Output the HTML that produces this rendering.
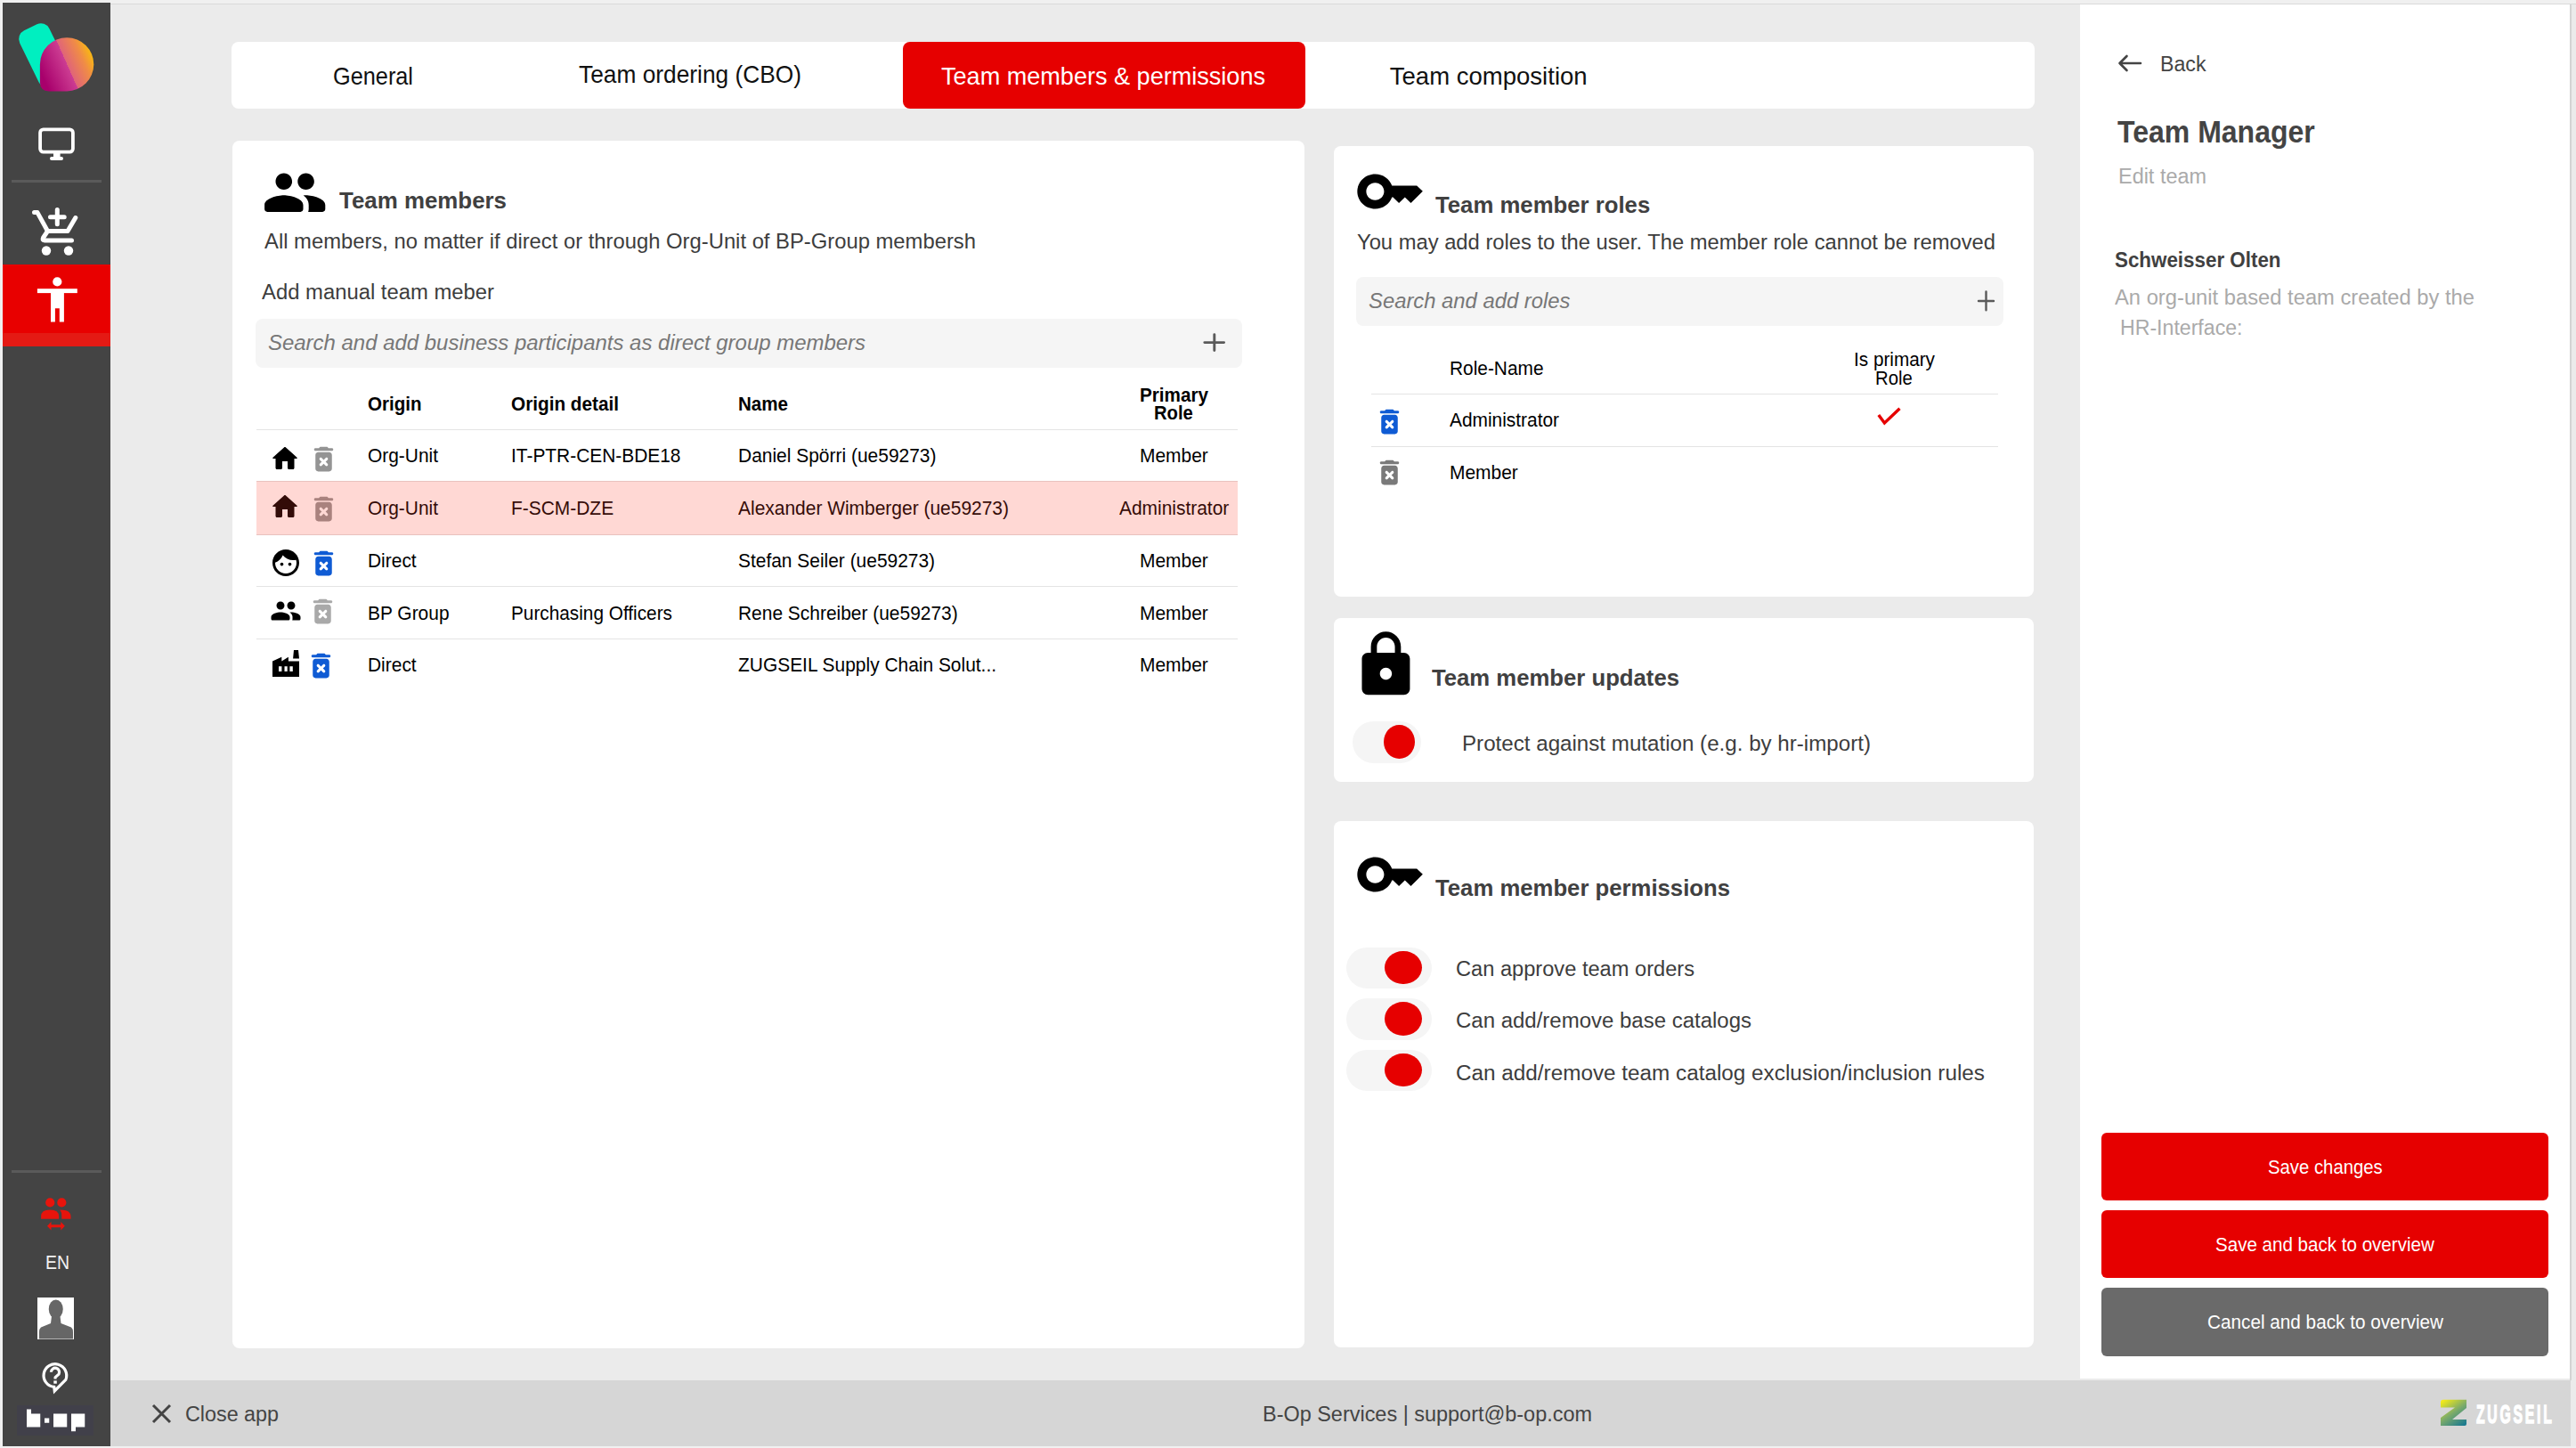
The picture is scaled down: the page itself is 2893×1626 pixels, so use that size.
<!DOCTYPE html>
<html><head><meta charset="utf-8">
<style>
html,body{margin:0;padding:0;}
body{width:2893px;height:1626px;position:relative;overflow:hidden;background:#f0f0f0;font-family:"Liberation Sans",sans-serif;}
.a{position:absolute;}
.t{position:absolute;white-space:nowrap;line-height:1;transform-origin:0 0;font-family:"Liberation Sans",sans-serif;}
.card{position:absolute;background:#fff;border-radius:8px;}
.sb{position:absolute;background:#f5f5f5;border-radius:8px;}
.hl{position:absolute;height:1px;background:#e4e4e4;}
.trk{position:absolute;background:#f5f5f5;border-radius:24px;}
.thm{position:absolute;background:#e60000;border-radius:50%;}
svg{position:absolute;overflow:visible;}
</style></head>
<body>
<!-- main background -->
<div class="a" style="left:124px;top:4px;width:2769px;height:1px;background:#d9d9d9"></div>
<div class="a" style="left:124px;top:5px;width:2769px;height:1619px;background:#ebebeb"></div>

<!-- sidebar -->
<div class="a" style="left:3px;top:3px;width:121px;height:1621px;background:#444"></div>
<svg style="left:0;top:0" width="124" height="120" viewBox="0 0 124 120">
  <defs>
    <linearGradient id="lg" gradientUnits="userSpaceOnUse" x1="47" y1="84" x2="103" y2="59">
      <stop offset="0" stop-color="#a8006c"/>
      <stop offset="0.5" stop-color="#cc3d92"/>
      <stop offset="0.5" stop-color="#e06479"/>
      <stop offset="0.8" stop-color="#f08c46"/>
      <stop offset="1" stop-color="#f9ba10"/>
    </linearGradient>
  </defs>
  <rect x="-18.5" y="-35" width="37" height="70" rx="10.5" fill="#00efc0" transform="translate(49.6,62.3) rotate(-26)"/>
  <path d="M44.9,72.3 A30.2,30.1 0 0 1 105.3,72.3 A30.2,30.1 0 0 1 75.1,102.4 L55,102.4 Q44.9,102.4 44.9,92.3 Z" fill="url(#lg)"/>
</svg>
<!-- monitor -->
<svg style="left:0;top:0" width="124" height="200">
  <rect x="45.1" y="145.4" width="36.8" height="25.2" rx="3.5" fill="none" stroke="#fff" stroke-width="3.8"/>
  <rect x="60" y="171" width="7.6" height="6" fill="#fff"/>
  <rect x="56" y="176" width="15" height="4" rx="2" fill="#fff"/>
</svg>
<div class="a" style="left:13px;top:202px;width:101px;height:3px;background:#5a5a5a"></div>
<!-- cart -->
<svg style="left:0;top:0" width="124" height="300">
  <path d="M38.5,238.6 L42,238.6 L53.5,259.5 L76,259.5 L84.8,244.5" fill="none" stroke="#fff" stroke-width="5" stroke-linecap="round" stroke-linejoin="round"/>
  <path d="M53.5,259.5 L48.5,267 Q47,270 50,270 L80.5,270" fill="none" stroke="#fff" stroke-width="5" stroke-linecap="round" stroke-linejoin="round"/>
  <circle cx="52" cy="281.5" r="5.2" fill="#fff"/>
  <circle cx="77" cy="281.5" r="5.2" fill="#fff"/>
  <path d="M56.5,243.7 L72.2,243.7 M64.3,235.6 L64.3,251.8" stroke="#fff" stroke-width="5" stroke-linecap="round"/>
</svg>
<!-- active red item -->
<div class="a" style="left:3px;top:297px;width:121px;height:77px;background:#e80000"></div>
<div class="a" style="left:3px;top:374px;width:121px;height:15px;background:#e41a14"></div>
<svg style="left:0;top:0" width="124" height="400">
  <circle cx="64.3" cy="316.4" r="5.1" fill="#fff"/>
  <rect x="41.9" y="324.2" width="44.9" height="4.9" fill="#fff"/>
  <path d="M57,329 L71.9,329 L71.9,361.4 L66.8,361.4 L66.8,346.2 L61.9,346.2 L61.9,361.4 L57,361.4 Z" fill="#fff"/>
</svg>

<div class="a" style="left:13px;top:1314px;width:101px;height:3px;background:#5a5a5a"></div>
<!-- team switch icon (red) -->
<svg style="left:0;top:0" width="124" height="1400">
  <circle cx="56.25" cy="1350.4" r="5.1" fill="#e8140c"/>
  <circle cx="69.3" cy="1350.4" r="5.1" fill="#e8140c"/>
  <path d="M46.1,1368.7 L46.1,1366 Q46.1,1358.6 56.1,1358.6 Q66.1,1358.6 66.1,1366 L66.1,1368.7 Z" fill="#e8140c"/>
  <path d="M67.3,1358.6 Q79.5,1358.6 79.5,1366 L79.5,1368.7 L69.3,1368.7 L69.3,1366 Q69.3,1361 67.3,1358.6 Z" fill="#e8140c"/>
  <path d="M53,1376.7 L57.5,1372 L57.5,1375.2 L68.3,1375.2 L68.3,1372 L72.8,1376.7 L68.3,1381.4 L68.3,1378.2 L57.5,1378.2 L57.5,1381.4 Z" fill="#e8140c"/>
</svg>
<!-- avatar -->
<div class="a" style="left:42px;top:1457px;width:41px;height:47px;background:#fff"></div>
<svg style="left:0;top:0" width="124" height="1510">
  <ellipse cx="62.75" cy="1470" rx="8" ry="10.5" fill="#666"/>
  <path d="M58,1478 L67.5,1478 L68.5,1486 L80,1490.5 Q82,1492 82,1496 L82,1503.5 L44,1503.5 L44,1496 Q44,1492 46,1490.5 L57,1486 Z" fill="#666"/>
</svg>
<!-- help -->
<svg style="left:0;top:0" width="124" height="1600">
  <path d="M61.3,1562 L60.78,1557.4 A12.85,12.85 0 1 1 73.8,1549.4 Z" fill="none" stroke="#fff" stroke-width="3.2" stroke-linejoin="miter" stroke-miterlimit="3"/>
  <path d="M57.4,1540.8 A4.6,4.6 0 1 1 66,1543.1 L62.1,1546.6 L62.1,1548.6" fill="none" stroke="#fff" stroke-width="3.2" stroke-linejoin="round"/>
  <rect x="60.3" y="1550.4" width="3.5" height="3.3" fill="#fff"/>
</svg>
<!-- b-op -->
<div class="a" style="left:19px;top:1578px;width:86px;height:34px;background:#41404a"></div>
<svg style="left:0;top:0" width="124" height="1626">
  <path d="M30,1582.5 L35,1582.5 L35,1587.5 L45.25,1587.5 L45.25,1602.5 L30,1602.5 Z" fill="#fff"/>
  <rect x="50" y="1592.5" width="5.25" height="5.25" fill="#fff"/>
  <rect x="60" y="1587.5" width="15.25" height="15" fill="#fff"/>
  <path d="M80,1587.5 L95.25,1587.5 L95.25,1602.5 L85,1602.5 L85,1607.25 L80,1607.25 Z" fill="#fff"/>
</svg>

<!-- footer -->
<div class="a" style="left:124px;top:1550px;width:2763px;height:74px;background:#d6d6d6"></div>
<svg style="left:0;top:0" width="400" height="1626">
  <path d="M172,1578 L191,1597 M191,1578 L172,1597" stroke="#444" stroke-width="3"/>
</svg>
<svg style="left:0;top:0" width="2893" height="1626">
  <defs>
    <linearGradient id="zg" gradientUnits="userSpaceOnUse" x1="2745" y1="1572" x2="2766" y2="1601">
      <stop offset="0" stop-color="#f2ea1a"/>
      <stop offset="0.5" stop-color="#7aaa6a"/>
      <stop offset="1" stop-color="#1a7a90"/>
    </linearGradient>
  </defs>
  <path d="M2744,1571.8 L2770,1571.8 L2770,1581 L2754,1594 L2770,1594 L2770,1599 Q2770,1601 2768,1601 L2741,1601 L2741,1592 L2757,1580.5 L2741,1580.5 L2741,1575 Q2741,1571.8 2744,1571.8 Z" fill="url(#zg)"/>
</svg>

<!-- tab bar -->
<div class="a" style="left:260px;top:47px;width:2025px;height:74.5px;background:#fff;border-radius:8px"></div>
<div class="a" style="left:1014.25px;top:47px;width:451.5px;height:74.5px;background:#e60000;border-radius:8px"></div>

<!-- team members card -->
<div class="card" style="left:261px;top:158px;width:1204px;height:1355.5px"></div>
<svg style="left:293.7px;top:178.5px" width="74.4" height="74.4" viewBox="0 0 24 24"><path fill="#000" d="M16 11c1.66 0 2.99-1.34 2.99-3S17.66 5 16 5s-3 1.34-3 3 1.34 3 3 3zm-8 0c1.66 0 2.99-1.34 2.99-3S9.66 5 8 5 5 6.34 5 8s1.34 3 3 3zm0 2c-2.33 0-7 1.17-7 3.5V18c0 .55.45 1 1 1h12c.55 0 1-.45 1-1v-1.5c0-2.33-4.67-3.5-7-3.5zm8 0c-.29 0-.62.02-.97.05.02.01.03.03.04.04 1.14.83 1.93 1.94 1.93 3.41V18c0 .35-.07.69-.18 1H22c.55 0 1-.45 1-1v-1.5c0-2.33-4.67-3.5-7-3.5z"/></svg>
<div class="sb" style="left:287px;top:357.5px;width:1108px;height:55.5px"></div>
<svg style="left:0;top:0" width="1400" height="420"><path d="M1352.8,384.6 L1374.6,384.6 M1363.8,375.6 L1363.8,393.5" stroke="#5a5a5a" stroke-width="2.9" stroke-linecap="round"/></svg>

<!-- table lines -->
<div class="hl" style="left:288px;top:481.5px;width:1102px"></div>
<div class="hl" style="left:288px;top:539.5px;width:1102px"></div>
<div class="hl" style="left:288px;top:600px;width:1102px"></div>
<div class="hl" style="left:288px;top:657.5px;width:1102px"></div>
<div class="hl" style="left:288px;top:717px;width:1102px"></div>

<!-- row icons -->
<!-- home row1 -->
<svg style="left:301.6px;top:497px" width="36" height="36" viewBox="0 0 24 24"><path fill="#000" d="M10 19v-5h4v5c0 .55.45 1 1 1h3c.55 0 1-.45 1-1v-7h1.7c.46 0 .68-.57.33-.87L12.67 3.6c-.38-.34-.96-.34-1.34 0l-8.36 7.53c-.34.3-.13.87.33.87H5v7c0 .55.45 1 1 1h3c.55 0 1-.45 1-1z"/></svg>
<svg style="left:345.4px;top:497.4px" width="37" height="37" viewBox="0 0 24 24"><path fill="#949494" d="M6 19c0 1.1.9 2 2 2h8c1.1 0 2-.9 2-2V9c0-1.1-.9-2-2-2H8c-1.1 0-2 .9-2 2v10zm3.17-7.83c.39-.39 1.02-.39 1.41 0L12 12.59l1.42-1.42c.39-.39 1.020-.39 1.41 0 .39.39.39 1.02 0 1.41L13.41 14l1.42 1.42c.39.39.39 1.02 0 1.41-.39.39-1.02.39-1.41 0L12 15.41l-1.42 1.42c-.39.39-1.02.39-1.41 0-.39-.39-.39-1.02 0-1.41L10.59 14l-1.42-1.42c-.39-.38-.39-1.01 0-1.41zM15.5 4l-.71-.71c-.18-.18-.44-.29-.7-.29H9.91c-.26 0-.52.11-.7.29L8.5 4H6c-.55 0-1 .45-1 1s.45 1 1 1h12c.55 0 1-.45 1-1s-.45-1-1-1h-2.5z"/></svg>
<!-- home row2 -->
<svg style="left:301.6px;top:550.9px" width="36" height="36" viewBox="0 0 24 24"><path fill="#000" d="M10 19v-5h4v5c0 .55.45 1 1 1h3c.55 0 1-.45 1-1v-7h1.7c.46 0 .68-.57.33-.87L12.67 3.6c-.38-.34-.96-.34-1.34 0l-8.36 7.53c-.34.3-.13.87.33.87H5v7c0 .55.45 1 1 1h3c.55 0 1-.45 1-1z"/></svg>
<svg style="left:345.4px;top:552.5px" width="37" height="37" viewBox="0 0 24 24"><path fill="#949494" d="M6 19c0 1.1.9 2 2 2h8c1.1 0 2-.9 2-2V9c0-1.1-.9-2-2-2H8c-1.1 0-2 .9-2 2v10zm3.17-7.830c.39-.39 1.02-.39 1.41 0L12 12.59l1.42-1.42c.39-.39 1.02-.39 1.41 0 .39.39.39 1.02 0 1.41L13.41 14l1.42 1.42c.39.39.39 1.02 0 1.41-.39.39-1.02.39-1.41 0L12 15.41l-1.42 1.42c-.39.39-1.02.39-1.41 0-.39-.39-.39-1.02 0-1.41L10.59 14l-1.42-1.42c-.39-.38-.39-1.01 0-1.41zM15.5 4l-.71-.71c-.18-.18-.44-.29-.7-.29H9.91c-.26 0-.52.11-.7.29L8.5 4H6c-.55 0-1 .45-1 1s.45 1 1 1h12c.55 0 1-.45 1-1s-.45-1-1-1h-2.5z"/></svg>
<!-- face row3 -->
<svg style="left:303px;top:614px" width="36" height="36" viewBox="0 0 24 24"><path fill="#000" d="M10.25 13c0 .69-.56 1.25-1.250 1.25S7.75 13.69 7.75 13s.56-1.25 1.25-1.25 1.25.56 1.25 1.25zM15 11.75c-.69 0-1.25.56-1.25 1.25s.56 1.25 1.25 1.25 1.25-.56 1.25-1.25-.56-1.25-1.25-1.25zm7 .25c0 5.52-4.48 10-10 10S2 17.52 2 12 6.48 2 12 2s10 4.48 10 10zm-2 0c0-.78-.12-1.53-.33-2.24-.7.16-1.42.24-2.17.24-3.13 0-5.92-1.44-7.76-3.69C8.69 8.87 6.6 10.88 4 11.86c.01.04 0 .09 0 .14 0 4.41 3.59 8 8 8s8-3.59 8-8z"/></svg>
<svg style="left:345.4px;top:614.4px" width="37" height="37" viewBox="0 0 24 24"><path fill="#0f5bd4" d="M6 19c0 1.1.9 2 2 2h8c1.1 0 2-.9 2-2V9c0-1.1-.9-2-2-2H8c-1.1 0-2 .9-2 2v10zm3.17-7.83c.39-.39 1.02-.39 1.41 0L12 12.59l1.42-1.42c.39-.39 1.02-.39 1.41 0 .39.39.39 1.02 0 1.41L13.41 14l1.42 1.42c.39.39.39 1.02 0 1.41-.39.39-1.02.39-1.41 0L12 15.41l-1.42 1.42c-.39.39-1.02.39-1.41 0-.39-.39-.39-1.02 0-1.41L10.59 14l-1.42-1.42c-.39-.38-.39-1.01 0-1.41zM15.5 4l-.71-.71c-.18-.18-.44-.29-.7-.29H9.91c-.26 0-.52.11-.7.29L8.5 4H6c-.55 0-1 .45-1 1s.45 1 1 1h12c.55 0 1-.45 1-1s-.45-1-1-1h-2.5z"/></svg>
<!-- people row4 -->
<svg style="left:302.6px;top:668.3px" width="36" height="36" viewBox="0 0 24 24"><path fill="#000" d="M16 11c1.66 0 2.99-1.34 2.99-3S17.66 5 16 5s-3 1.34-3 3 1.34 3 3 3zm-8 0c1.66 0 2.99-1.34 2.99-3S9.66 5 8 5 5 6.34 5 8s1.34 3 3 3zm0 2c-2.33 0-7 1.17-7 3.5V18c0 .55.45 1 1 1h12c.55 0 1-.45 1-1v-1.5c0-2.33-4.67-3.5-7-3.5zm8 0c-.29 0-.62.02-.97.05.02.01.03.03.04.04 1.14.83 1.93 1.94 1.93 3.41V18c0 .35-.07.69-.18 1H22c.55 0 1-.45 1-1v-1.5c0-2.33-4.67-3.5-7-3.5z"/></svg>
<svg style="left:343.8px;top:668.4px" width="37" height="37" viewBox="0 0 24 24"><path fill="#a9a9a9" d="M6 19c0 1.1.9 2 2 2h8c1.1 0 2-.9 2-2V9c0-1.1-.9-2-2-2H8c-1.1 0-2 .9-2 2v10zm3.17-7.83c.39-.39 1.02-.39 1.41 0L12 12.59l1.42-1.42c.39-.39 1.02-.39 1.41 0 .39.39.39 1.02 0 1.41L13.41 14l1.42 1.42c.39.39.39 1.02 0 1.41-.39.39-1.02.39-1.41 0L12 15.41l-1.42 1.42c-.39.39-1.02.39-1.41 0-.39-.39-.39-1.02 0-1.41L10.59 14l-1.42-1.42c-.39-.38-.39-1.01 0-1.41zM15.5 4l-.71-.71c-.18-.18-.44-.29-.7-.29H9.910c-.26 0-.52.11-.7.29L8.5 4H6c-.55 0-1 .45-1 1s.45 1 1 1h12c.55 0 1-.45 1-1s-.45-1-1-1h-2.5z"/></svg>
<!-- factory row5 -->
<svg style="left:0;top:0" width="400" height="800">
  <path d="M306,742.5 L316.3,737.7 L316.3,742.5 L323.9,737.7 L323.9,742.5 L336,742.5 L336,760 L306,760 Z M313,748.2 L313,754 L316.4,754 L316.4,748.2 Z M319.5,748.2 L319.5,754 L322.7,754 L322.7,748.2 Z M325.4,748.2 L325.4,754 L328.8,754 L328.8,748.2 Z" fill="#000" fill-rule="evenodd"/>
  <path d="M330,730 L335,730 L336,739.6 L329.1,739.6 Z" fill="#000"/>
</svg>
<svg style="left:342.3px;top:728.6px" width="37" height="37" viewBox="0 0 24 24"><path fill="#0f5bd4" d="M6 19c0 1.1.9 2 2 2h8c1.1 0 2-.9 2-2V9c0-1.1-.9-2-2-2H8c-1.1 0-2 .9-2 2v10zm3.17-7.83c.39-.39 1.02-.39 1.41 0L12 12.59l1.42-1.42c.39-.39 1.02-.39 1.41 0 .39.39.39 1.02 0 1.41L13.41 14l1.42 1.42c.39.39.39 1.02 0 1.41-.39.39-1.02.39-1.41 0L12 15.41l-1.42 1.42c-.39.39-1.02.39-1.41 0-.39-.39-.39-1.02 0-1.41L10.59 14l-1.42-1.42c-.39-.38-.39-1.01 0-1.41zM15.5 4l-.71-.71c-.18-.18-.44-.29-.7-.29H9.91c-.26 0-.52.11-.7.29L8.5 4H6c-.55 0-1 .45-1 1s.45 1 1 1h12c.55 0 1-.45 1-1s-.45-1-1-1h-2.5z"/></svg>

<!-- roles card -->
<div class="card" style="left:1498px;top:164px;width:785.5px;height:506px"></div>
<svg style="left:1521.1px;top:176px" width="80.2" height="78" viewBox="0 0 24 24" preserveAspectRatio="none"><path fill="#000" d="M21 10h-8.35C11.83 7.67 9.61 6 7 6c-3.31 0-6 2.69-6 6s2.69 6 6 6c2.61 0 4.83-1.670 5.65-4H13l2 2 2-2 2 2 4-4.04L21 10zM7 15c-1.65 0-3-1.35-3-3s1.35-3 3-3 3 1.35 3 3-1.35 3-3 3z"/></svg>
<div class="sb" style="left:1522.5px;top:311px;width:727.5px;height:55px"></div>
<svg style="left:0;top:0" width="2300" height="400"><path d="M2222,338 L2239,338 M2230.5,327.5 L2230.5,348.3" stroke="#5a5a5a" stroke-width="2.4" stroke-linecap="round"/></svg>
<div class="hl" style="left:1540px;top:441.5px;width:704px"></div>
<div class="hl" style="left:1540px;top:501px;width:704px"></div>
<svg style="left:1542.3px;top:455.4px" width="37" height="37" viewBox="0 0 24 24"><path fill="#0f5bd4" d="M6 19c0 1.1.9 2 2 2h8c1.1 0 2-.9 2-2V9c0-1.1-.9-2-2-2H8c-1.1 0-2 .9-2 2v10zm3.17-7.83c.39-.39 1.02-.39 1.41 0L12 12.59l1.42-1.42c.39-.39 1.02-.39 1.41 0 .39.39.39 1.02 0 1.41L13.41 14l1.42 1.42c.39.39.39 1.02 0 1.41-.39.39-1.02.39-1.41 0L12 15.41l-1.42 1.42c-.39.39-1.02.39-1.41 0-.39-.39-.39-1.02 0-1.41L10.59 14l-1.42-1.42c-.39-.38-.39-1.01 0-1.41zM15.5 4l-.71-.71c-.18-.18-.44-.29-.7-.29H9.91c-.26 0-.52.11-.7.29L8.5 4H6c-.55 0-1 .45-1 1s.45 1 1 1h12c.55 0 1-.45 1-1s-.45-1-1-1h-2.5z"/></svg>
<svg style="left:1542.3px;top:512.4px" width="37" height="37" viewBox="0 0 24 24"><path fill="#7a7a7a" d="M6 19c0 1.1.9 2 2 2h8c1.1 0 2-.9 2-2V9c0-1.1-.9-2-2-2H8c-1.1 0-2 .9-2 2v10zm3.17-7.83c.39-.39 1.02-.39 1.41 0L12 12.59l1.42-1.42c.39-.39 1.02-.39 1.41 0 .39.39.39 1.02 0 1.41L13.41 14l1.42 1.42c.39.39.39 1.02 0 1.41-.39.39-1.02.39-1.41 0L12 15.41l-1.42 1.42c-.39.39-1.02.39-1.41 0-.39-.39-.39-1.02 0-1.41L10.59 14l-1.42-1.42c-.39-.38-.39-1.01 0-1.41zM15.5 4l-.71-.71c-.18-.18-.44-.29-.7-.29H9.91c-.26 0-.52.11-.7.29L8.5 4H6c-.55 0-1 .45-1 1s.45 1 1 1h12c.55 0 1-.45 1-1s-.45-1-1-1h-2.5z"/></svg>
<svg style="left:0;top:0" width="2300" height="500"><path d="M2109.8,466 L2116.4,475 L2133.5,458.8" fill="none" stroke="#e60000" stroke-width="3.4"/></svg>

<!-- updates card -->
<div class="card" style="left:1498px;top:694px;width:785.5px;height:184px"></div>
<svg style="left:1516.4px;top:705.8px" width="80.9" height="80.9" viewBox="0 0 24 24"><path fill="#000" d="M18 8h-1V6c0-2.76-2.24-5-5-5S7 3.24 7 6v2H6c-1.1 0-2 .9-2 2v10c0 1.1.9 2 2 2h12c1.1 0 2-.9 2-2V10c0-1.1-.9-2-2-2zm-6 9c-1.1 0-2-.9-2-2s.9-2 2-2 2 .9 2 2-.9 2-2 2zM9 8V6c0-1.66 1.34-3 3-3s3 1.34 3 3v2H9z"/></svg>
<div class="trk" style="left:1519.3px;top:810.2px;width:76.4px;height:46.8px"></div>
<div class="thm" style="left:1553.8px;top:814.2px;width:34.8px;height:37.8px"></div>

<!-- permissions card -->
<div class="card" style="left:1498px;top:922px;width:785.5px;height:591px"></div>
<svg style="left:1520.6px;top:943.1px" width="80.2" height="78" viewBox="0 0 24 24" preserveAspectRatio="none"><path fill="#000" d="M21 10h-8.35C11.83 7.67 9.61 6 7 6c-3.31 0-6 2.69-6 6s2.690 6 6 6c2.61 0 4.83-1.67 5.65-4H13l2 2 2-2 2 2 4-4.04L21 10zM7 15c-1.65 0-3-1.35-3-3s1.35-3 3-3 3 1.35 3 3-1.35 3-3 3z"/></svg>
<div class="trk" style="left:1511.8px;top:1063.5px;width:96px;height:46.6px"></div>
<div class="thm" style="left:1555.1px;top:1067.5px;width:42px;height:37.9px"></div>
<div class="trk" style="left:1511.8px;top:1121.3px;width:96px;height:46.6px"></div>
<div class="thm" style="left:1555.1px;top:1125.2px;width:42px;height:37.9px"></div>
<div class="trk" style="left:1511.8px;top:1178.6px;width:96px;height:46.6px"></div>
<div class="thm" style="left:1555.1px;top:1182.5px;width:42px;height:37.9px"></div>

<!-- right panel -->
<div class="a" style="left:2336px;top:5px;width:550px;height:1543px;background:#fff"></div>
<div class="a" style="left:2886px;top:5px;width:2px;height:1545px;background:#d4d4d4"></div>
<svg style="left:0;top:0" width="2893" height="200"><path d="M2404,71 L2380.5,71 M2388.5,63 L2380.5,71 L2388.5,79" fill="none" stroke="#444" stroke-width="2.6" stroke-linecap="round" stroke-linejoin="round"/></svg>
<div class="a" style="left:2360px;top:1272px;width:501.7px;height:76.4px;background:#e60000;border-radius:6px"></div>
<div class="a" style="left:2360px;top:1359px;width:501.7px;height:76.4px;background:#e60000;border-radius:6px"></div>
<div class="a" style="left:2360px;top:1446px;width:501.7px;height:76.5px;background:#6a6a6a;border-radius:6px"></div>

<!-- texts -->
<div class="t" style="left:374.25px;top:71.88px;font-size:27.9px;color:#111;transform:scaleX(0.9069);">General</div>
<div class="t" style="left:650.00px;top:70.44px;font-size:27.54px;color:#111;transform:scaleX(0.9555);">Team ordering (CBO)</div>
<div class="t" style="left:1057.00px;top:72.44px;font-size:27.54px;color:#fff;transform:scaleX(0.9831);">Team members &amp; permissions</div>
<div class="t" style="left:1560.75px;top:72.44px;font-size:27.54px;color:#111;">Team composition</div>
<div class="t" style="left:381.25px;top:211.87px;font-size:26.45px;color:#404040;font-weight:700;transform:scaleX(0.9791);">Team members</div>
<div class="t" style="left:297.00px;top:259.21px;font-size:24.28px;color:#3d3d3d;transform:scaleX(0.9809);">All members, no matter if direct or through Org-Unit of BP-Group membersh</div>
<div class="t" style="left:294.25px;top:315.91px;font-size:24.64px;color:#3d3d3d;transform:scaleX(0.9679);">Add manual team meber</div>
<div class="t" style="left:300.75px;top:374.33px;font-size:23.55px;color:#777;font-style:italic;transform:scaleX(1.0172);">Search and add business participants as direct group members</div>
<div class="t" style="left:412.50px;top:443.37px;font-size:21.74px;color:#000;font-weight:700;transform:scaleX(0.9453);">Origin</div>
<div class="t" style="left:573.75px;top:443.37px;font-size:21.74px;color:#000;font-weight:700;transform:scaleX(0.9542);">Origin detail</div>
<div class="t" style="left:828.75px;top:443.37px;font-size:21.74px;color:#000;font-weight:700;transform:scaleX(0.9459);">Name</div>
<div class="t" style="left:1279.50px;top:432.62px;font-size:21.74px;color:#000;font-weight:700;transform:scaleX(0.9512);">Primary</div>
<div class="t" style="left:1296.12px;top:452.87px;font-size:21.74px;color:#000;font-weight:700;transform:scaleX(0.9287);">Role</div>
<div class="t" style="left:412.50px;top:501.37px;font-size:21.74px;color:#000;transform:scaleX(0.9619);">Org-Unit</div>
<div class="t" style="left:573.75px;top:501.37px;font-size:21.74px;color:#000;transform:scaleX(0.9618);">IT-PTR-CEN-BDE18</div>
<div class="t" style="left:828.75px;top:501.37px;font-size:21.74px;color:#000;transform:scaleX(0.9642);">Daniel Spörri (ue59273)</div>
<div class="t" style="left:1280.03px;top:501.37px;font-size:21.74px;color:#000;transform:scaleX(0.9628);">Member</div>
<div class="t" style="left:412.50px;top:559.62px;font-size:21.74px;color:#000;transform:scaleX(0.9619);">Org-Unit</div>
<div class="t" style="left:573.75px;top:559.62px;font-size:21.74px;color:#000;transform:scaleX(0.9630);">F-SCM-DZE</div>
<div class="t" style="left:828.75px;top:559.62px;font-size:21.74px;color:#000;transform:scaleX(0.9641);">Alexander Wimberger (ue59273)</div>
<div class="t" style="left:1256.78px;top:559.62px;font-size:21.74px;color:#000;transform:scaleX(0.9627);">Administrator</div>
<div class="t" style="left:412.50px;top:619.12px;font-size:21.74px;color:#000;transform:scaleX(0.9630);">Direct</div>
<div class="t" style="left:828.75px;top:619.12px;font-size:21.74px;color:#000;transform:scaleX(0.9630);">Stefan Seiler (ue59273)</div>
<div class="t" style="left:1280.03px;top:619.12px;font-size:21.74px;color:#000;transform:scaleX(0.9628);">Member</div>
<div class="t" style="left:412.50px;top:678.37px;font-size:21.74px;color:#000;transform:scaleX(0.9630);">BP Group</div>
<div class="t" style="left:573.75px;top:678.37px;font-size:21.74px;color:#000;transform:scaleX(0.9563);">Purchasing Officers</div>
<div class="t" style="left:828.75px;top:678.37px;font-size:21.74px;color:#000;transform:scaleX(0.9630);">Rene Schreiber (ue59273)</div>
<div class="t" style="left:1280.03px;top:678.37px;font-size:21.74px;color:#000;transform:scaleX(0.9628);">Member</div>
<div class="t" style="left:412.50px;top:735.87px;font-size:21.74px;color:#000;transform:scaleX(0.9630);">Direct</div>
<div class="t" style="left:828.75px;top:735.87px;font-size:21.74px;color:#000;transform:scaleX(0.9630);">ZUGSEIL Supply Chain Solut...</div>
<div class="t" style="left:1280.03px;top:735.87px;font-size:21.74px;color:#000;transform:scaleX(0.9628);">Member</div>
<div class="t" style="left:1611.75px;top:217.17px;font-size:26.09px;color:#404040;font-weight:700;transform:scaleX(0.9868);">Team member roles</div>
<div class="t" style="left:1524.25px;top:261.08px;font-size:23.55px;color:#3d3d3d;transform:scaleX(1.0088);">You may add roles to the user. The member role cannot be removed</div>
<div class="t" style="left:1536.75px;top:326.83px;font-size:23.55px;color:#777;font-style:italic;transform:scaleX(1.0118);">Search and add roles</div>
<div class="t" style="left:1627.50px;top:403.37px;font-size:21.74px;color:#000;transform:scaleX(0.9598);">Role-Name</div>
<div class="t" style="left:2081.50px;top:393.12px;font-size:21.74px;color:#000;transform:scaleX(0.9538);">Is primary</div>
<div class="t" style="left:2106.15px;top:413.52px;font-size:21.74px;color:#000;transform:scaleX(0.9328);">Role</div>
<div class="t" style="left:1627.50px;top:461.37px;font-size:21.74px;color:#000;transform:scaleX(0.9607);">Administrator</div>
<div class="t" style="left:1627.50px;top:520.12px;font-size:21.74px;color:#000;transform:scaleX(0.9628);">Member</div>
<div class="t" style="left:1608.25px;top:749.04px;font-size:25.36px;color:#404040;font-weight:700;transform:scaleX(1.0133);">Team member updates</div>
<div class="t" style="left:1642.00px;top:824.33px;font-size:23.55px;color:#3d3d3d;transform:scaleX(1.0255);">Protect against mutation (e.g. by hr-import)</div>
<div class="t" style="left:1611.50px;top:985.04px;font-size:25.36px;color:#404040;font-weight:700;transform:scaleX(1.0137);">Team member permissions</div>
<div class="t" style="left:1634.50px;top:1076.18px;font-size:23.91px;color:#3d3d3d;transform:scaleX(0.9886);">Can approve team orders</div>
<div class="t" style="left:1634.50px;top:1134.28px;font-size:23.91px;color:#3d3d3d;transform:scaleX(1.0033);">Can add/remove base catalogs</div>
<div class="t" style="left:1635.00px;top:1192.78px;font-size:23.91px;color:#3d3d3d;transform:scaleX(1.0159);">Can add/remove team catalog exclusion/inclusion rules</div>
<div class="t" style="left:2426.00px;top:59.58px;font-size:24.49px;color:#444;transform:scaleX(0.9460);">Back</div>
<div class="t" style="left:2378.10px;top:131.30px;font-size:34.35px;color:#444;font-weight:700;transform:scaleX(0.9325);">Team Manager</div>
<div class="t" style="left:2378.50px;top:185.68px;font-size:24.49px;color:#aaa;transform:scaleX(0.9571);">Edit team</div>
<div class="t" style="left:2374.80px;top:279.83px;font-size:24.2px;color:#404040;font-weight:700;transform:scaleX(0.9248);">Schweisser Olten</div>
<div class="t" style="left:2374.80px;top:322.48px;font-size:24.49px;color:#aaa;transform:scaleX(0.9700);">An org-unit based team created by the</div>
<div class="t" style="left:2381.00px;top:356.28px;font-size:24.49px;color:#aaa;transform:scaleX(0.9444);">HR-Interface:</div>
<div class="t" style="left:2546.60px;top:1300.12px;font-size:21.74px;color:#fff;transform:scaleX(0.9349);">Save changes</div>
<div class="t" style="left:2488.10px;top:1387.02px;font-size:21.74px;color:#fff;transform:scaleX(0.9462);">Save and back to overview</div>
<div class="t" style="left:2478.50px;top:1474.02px;font-size:21.74px;color:#fff;transform:scaleX(0.9537);">Cancel and back to overview</div>
<div class="t" style="left:51.00px;top:1408.17px;font-size:21.45px;color:#f2f2f2;transform:scaleX(0.9066);">EN</div>
<div class="t" style="left:207.50px;top:1576.28px;font-size:23.91px;color:#444;transform:scaleX(0.9753);">Close app</div>
<div class="t" style="left:1417.50px;top:1576.16px;font-size:24.64px;color:#444;transform:scaleX(0.9521);">B-Op Services | support@b-op.com</div>
<div class="t" style="left:2781.00px;top:1572.65px;font-size:29.71px;color:#fff;font-weight:700;transform:scaleX(0.5300);-webkit-text-stroke:1.4px #fff;letter-spacing:5.2px;">ZUGSEIL</div>

<!-- highlight overlay row 2 -->
<div class="a" style="left:288px;top:539.5px;width:1102px;height:61px;background:rgba(255,60,40,0.2)"></div>
</body></html>
